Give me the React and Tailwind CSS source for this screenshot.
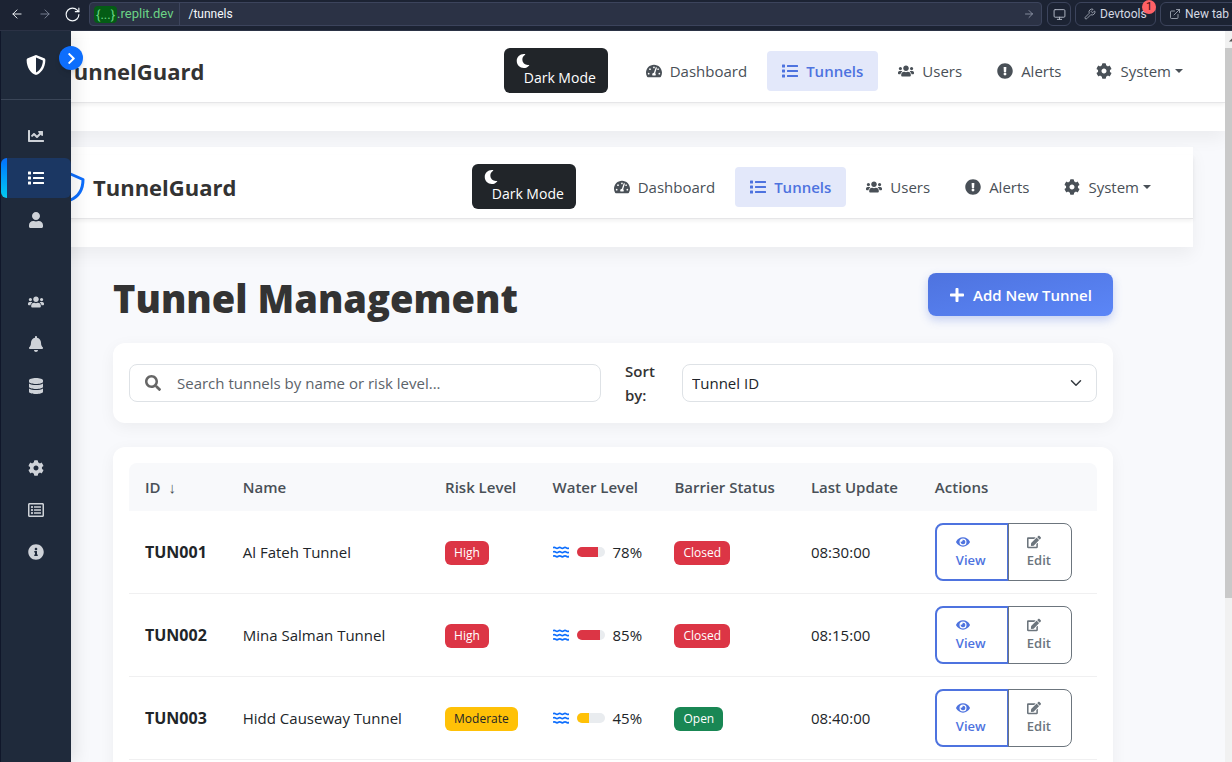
import React from "react";
import {
  FaBell, FaChartLine, FaChevronRight, FaCog, FaDatabase, FaEdit, FaExclamationCircle, FaEye,
  FaInfoCircle, FaList, FaMoon, FaPlus, FaRegListAlt, FaSearch, FaShieldAlt, FaTachometerAlt, FaUser, FaUsers,
} from "react-icons/fa";
import { ArrowLeft, ArrowRight, ExternalLink, Monitor, RotateCw, Wrench } from "lucide-react";

const sideGroups = [
  [
    { label: "Dashboard", icon: FaChartLine },
    { label: "Tunnels", icon: FaList, active: true },
    { label: "Profile", icon: FaUser },
  ],
  [
    { label: "Users", icon: FaUsers },
    { label: "Alerts", icon: FaBell },
    { label: "Data", icon: FaDatabase },
  ],
  [
    { label: "Settings", icon: FaCog },
    { label: "Logs", icon: FaRegListAlt },
    { label: "About", icon: FaInfoCircle },
  ],
];

const navLinks = [
  { label: "Dashboard", icon: FaTachometerAlt },
  { label: "Tunnels", icon: FaList, active: true },
  { label: "Users", icon: FaUsers },
  { label: "Alerts", icon: FaExclamationCircle },
  { label: "System", icon: FaCog, menu: true },
];

const red = "bg-[#dc3545] text-white";
const yellow = "bg-[#ffc107] text-[#212529]";
const green = "bg-[#198754] text-white";

const tunnels = [
  { id: "TUN001", name: "Al Fateh Tunnel", risk: "High", riskTone: red, water: 78, barTone: "bg-[#dc3545]", barrier: "Closed", barrierTone: red, time: "08:30:00" },
  { id: "TUN002", name: "Mina Salman Tunnel", risk: "High", riskTone: red, water: 85, barTone: "bg-[#dc3545]", barrier: "Closed", barrierTone: red, time: "08:15:00" },
  { id: "TUN003", name: "Hidd Causeway Tunnel", risk: "Moderate", riskTone: yellow, water: 45, barTone: "bg-[#ffc107]", barrier: "Open", barrierTone: green, time: "08:40:00" },
];

function BrowserBar() {
  return (
    <header className="flex h-[31px] shrink-0 items-start overflow-hidden border-b border-[#2b3245] bg-[#1c2333] pt-[2px] font-['Roboto',sans-serif] text-xs text-[#f5f9fc]">
      <div className="flex h-6 w-[89px] shrink-0 items-center gap-3 pl-[10px]">
        <button aria-label="Back"><ArrowLeft size={14} strokeWidth={1.6} /></button>
        <button aria-label="Forward" className="ml-[2px] text-[#7c8496]"><ArrowRight size={14} strokeWidth={1.6} /></button>
        <button aria-label="Reload"><RotateCw size={17} strokeWidth={1.6} /></button>
      </div>
      <div className="flex h-6 min-w-0 flex-1 items-center rounded border border-[#3c445c] bg-[#2b3245] pr-[6px] pl-1">
        <span className="flex h-full items-center border-r border-[#3c445c] pr-[6px] text-[13px] text-[#6bd385]">
          <span className="rounded bg-[#045c15] px-[2px] leading-[17px]">{"{...}"}</span>.replit.dev
        </span>
        <input aria-label="Path" defaultValue="/tunnels" className="h-full min-w-0 flex-1 bg-transparent pl-2 text-xs outline-none" />
        <ArrowRight size={12} strokeWidth={1.6} className="text-[#9aa1b2]" />
      </div>
      <button aria-label="Screen size" className="ml-[5px] flex h-6 w-6 items-center justify-center rounded-md border border-[#3c445c] text-[#b0b6c3]">
        <Monitor size={13} strokeWidth={1.8} />
      </button>
      <div className="relative ml-1">
        <button className="flex h-6 w-[81px] items-center gap-1 rounded-md border border-[#3c445c] pl-2 text-[#d5d9e2]">
          <Wrench size={12} strokeWidth={1.6} className="text-[#b0b6c3]" />Devtools
        </button>
        <span className="absolute -top-[2px] right-0 h-[14px] w-[14px] rounded-full bg-[#ff6166] text-center text-[11px] leading-[14px] text-[#3b0b0d]">1</span>
      </div>
      <button className="-mr-2 ml-1 flex h-6 w-20 items-center gap-1 rounded-md border border-[#3c445c] pl-2 whitespace-nowrap text-[#d5d9e2]">
        <ExternalLink size={12} strokeWidth={1.6} className="text-[#b0b6c3]" />New tab
      </button>
    </header>
  );
}

function SideBar() {
  return (
    <aside className="absolute inset-y-0 left-0 z-10 w-[70px] bg-[#1f2a3b] text-[#ced2d8] shadow-[4px_0_16px_rgba(0,0,0,0.1)]">
      <div className="flex h-[69px] items-center justify-center border-b border-[#3a4557] text-white">
        <FaShieldAlt size={20} />
      </div>
      <button aria-label="Expand menu" className="absolute top-[15px] -right-3 flex h-6 w-6 items-center justify-center rounded-full bg-[#0d6efd] text-white shadow-md">
        <FaChevronRight size={13} />
      </button>
      <nav aria-label="Sections" className="flex flex-col gap-[42px] pt-4">
        {sideGroups.map((group, i) => (
          <div key={i} className="flex flex-col gap-[2px]">
            {group.map(({ label, icon: Icon, active }) => (
              <a
                key={label}
                href="#"
                aria-label={label}
                className={
                  active
                    ? "relative flex h-10 items-center justify-center overflow-hidden rounded-md bg-[#1b3763] text-white"
                    : "flex h-10 items-center justify-center"
                }
              >
                {active && <span className="absolute inset-y-0 left-0 w-[6px] bg-linear-to-b from-[#0d6efd] to-[#0dcaf0]" />}
                <Icon size={16} />
              </a>
            ))}
          </div>
        ))}
      </nav>
    </aside>
  );
}

function NavBar() {
  return (
    <div className="bg-white pt-2 pb-7 shadow-[0_8px_16px_rgba(0,0,0,0.05)]">
      <div className="flex h-16 items-center border-b border-[#e6e6e8] bg-white pr-[27px] pl-[23px] shadow-[0_2px_4px_rgba(0,0,0,0.06)]">
        <a href="#" className="flex items-center gap-2 text-[22px] font-bold text-[#333]">
          <svg width="29" height="30" viewBox="0 0 29 30" fill="none" stroke="#0d6efd" strokeWidth="3" strokeLinejoin="round">
            <path d="M14.5 2 27 7.5C27 18 22.5 24.5 14.5 28 6.5 24.5 2 18 2 7.5Z" />
          </svg>
          TunnelGuard
        </a>
        <button className="mr-[22px] ml-auto flex h-[45px] w-[104px] flex-col items-start justify-center rounded-md bg-[#212529] px-3 text-white">
          <FaMoon size={14} />
          <span className="pl-2 text-sm leading-5 whitespace-nowrap">Dark Mode</span>
        </button>
        <nav aria-label="Main" className="flex gap-[5px]">
          {navLinks.map(({ label, icon: Icon, active, menu }) => (
            <a
              key={label}
              href="#"
              className={
                active
                  ? "flex h-10 items-center gap-2 rounded bg-[#e3e8fa] px-[15px] text-[15px] font-semibold text-[#4e73df]"
                  : "flex h-10 items-center gap-2 rounded px-[15px] text-[15px] text-[#495057] first:pl-4"
              }
            >
              <Icon size={16} />
              <span className="flex items-center gap-1">
                {label}
                {menu && <span className="border-x-4 border-t-4 border-x-transparent border-t-[#495057]" />}
              </span>
            </a>
          ))}
        </nav>
      </div>
    </div>
  );
}

function Waves() {
  const wave = "q1.33-1 2.67 0t2.67 0 2.67 0 2.67 0 2.67 0 2.67 0";
  return (
    <svg width="16" height="12" viewBox="0 0 16 12" fill="none" stroke="#0d6efd" strokeWidth="1.8" className="shrink-0">
      <path d={"M0 1.9" + wave} />
      <path d={"M0 6.1" + wave} />
      <path d={"M0 10.3" + wave} />
    </svg>
  );
}

function Badge({ tone, children }) {
  return <span className={"inline-flex h-6 items-center rounded-md px-[9px] text-xs " + tone}>{children}</span>;
}

function TunnelTable() {
  return (
    <section className="mt-6 rounded-xl bg-white p-4 shadow-[0_4px_16px_rgba(0,0,0,0.05)]">
      <table className="w-full table-fixed border-separate border-spacing-0 text-left whitespace-nowrap text-[#212529]">
        <colgroup>
          <col className="w-[10.1%]" />
          <col className="w-[20.9%]" />
          <col className="w-[11.1%]" />
          <col className="w-[12.6%]" />
          <col className="w-[14.1%]" />
          <col className="w-[12.8%]" />
          <col />
        </colgroup>
        <thead>
          <tr className="h-12 bg-[#f8f9fb] text-[#495057] [&>th]:px-4 [&>th]:font-semibold">
            <th className="rounded-tl-lg">ID<span className="pl-2">↓</span></th>
            <th>Name</th>
            <th>Risk Level</th>
            <th>Water Level</th>
            <th>Barrier Status</th>
            <th>Last Update</th>
            <th className="rounded-tr-lg">Actions</th>
          </tr>
        </thead>
        <tbody>
          {tunnels.map((t) => (
            <tr key={t.id} className="h-[83px] [&>td]:border-b [&>td]:border-[#f0f0f1] [&>td]:px-4">
              <td className="text-base font-bold">{t.id}</td>
              <td>{t.name}</td>
              <td><Badge tone={t.riskTone}>{t.risk}</Badge></td>
              <td>
                <div className="flex items-center gap-2">
                  <Waves />
                  <div className="h-[10px] w-7 overflow-hidden rounded-full bg-[#e9ecef]">
                    <div className={"h-full " + t.barTone} style={{ width: t.water + "%" }} />
                  </div>
                  <span>{t.water}%</span>
                </div>
              </td>
              <td><Badge tone={t.barrierTone}>{t.barrier}</Badge></td>
              <td>{t.time}</td>
              <td>
                <div className="flex text-[13px] leading-[18px] font-semibold">
                  <button className="flex h-[58px] w-[74px] flex-col items-start justify-center gap-[2px] rounded-l-lg border-2 border-[#4e73df] pl-[19px] text-[#4e73df]">
                    <FaEye size={14} />View
                  </button>
                  <button className="-ml-px flex h-[58px] w-16 flex-col items-start justify-center gap-[2px] rounded-r-lg border border-[#6c757d] pl-[18px] text-[#6c757d]">
                    <FaEdit size={14} />Edit
                  </button>
                </div>
              </td>
            </tr>
          ))}
        </tbody>
      </table>
    </section>
  );
}

function ScrollBar() {
  return (
    <div aria-hidden="true" className="flex w-[7px] shrink-0 flex-col overflow-hidden bg-[#f1f1f1]">
      <svg width="17" height="17" viewBox="0 0 17 17" className="shrink-0" fill="#505050"><path d="M4 10.5 8.5 6 13 10.5Z" /></svg>
      <div className="flex-[550] bg-[#c9c9c9]" />
      <div className="flex-[164]" />
    </div>
  );
}

export default function App() {
  return (
    <div className="flex h-screen flex-col overflow-hidden bg-[#10172a] font-['Open_Sans','Noto_Sans',sans-serif] text-[15px] leading-6">
      <BrowserBar />
      <div className="flex min-h-0 flex-1 pl-px">
        <div className="relative min-w-0 flex-1 overflow-hidden bg-[#f8f9fc]">
          <SideBar />
          <NavBar />
          <div className="px-8 pt-4">
            <NavBar />
            <main className="px-20 pt-[26px]">
              <div className="flex items-start justify-between">
                <h1 className="text-[38px] leading-[50px] font-extrabold text-[#333]">Tunnel Management</h1>
                <button className="flex h-[43px] min-w-[185px] items-center justify-center gap-2 rounded-lg bg-linear-to-br from-[#4e73df] to-[#5b86f7] px-4 font-semibold text-white shadow-[0_4px_10px_rgba(78,115,223,0.3)]">
                  <FaPlus size={16} />Add New Tunnel
                </button>
              </div>
              <section className="mt-5 grid grid-cols-[472fr_33px_415fr] items-center gap-6 rounded-xl bg-white p-4 shadow-[0_4px_16px_rgba(0,0,0,0.05)]">
                <label className="flex h-[38px] items-center gap-4 rounded-lg border border-[#dee2e6] px-[15px] text-[#666]">
                  <FaSearch size={16} className="shrink-0" />
                  <input type="search" aria-label="Search tunnels" placeholder="Search tunnels by name or risk level..." className="min-w-0 flex-1 outline-none placeholder:text-[#5c636a]" />
                </label>
                <label htmlFor="sort" className="font-semibold text-[#333]">Sort by:</label>
                <div className="relative">
                  <select id="sort" className="h-[38px] w-full appearance-none rounded-lg border border-[#dee2e6] bg-white px-[9px] text-[#212529]">
                    <option>Tunnel ID</option>
                    <option>Name</option>
                    <option>Risk Level</option>
                  </select>
                  <svg className="pointer-events-none absolute top-[13px] right-[15px]" width="12" height="12" viewBox="0 0 16 16" fill="none" stroke="#343a40" strokeWidth="2" strokeLinecap="round" strokeLinejoin="round">
                    <path d="m2 5 6 6 6-6" />
                  </svg>
                </div>
              </section>
              <TunnelTable />
            </main>
          </div>
        </div>
        <ScrollBar />
      </div>
    </div>
  );
}
